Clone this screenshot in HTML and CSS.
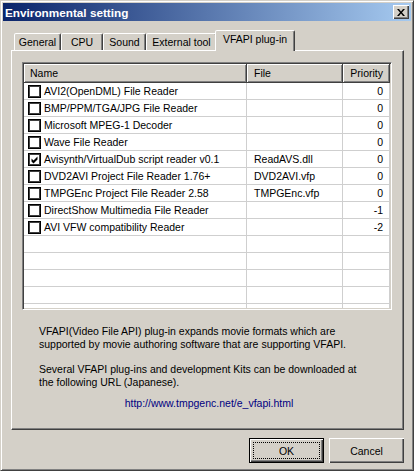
FILE: index.html
```html
<!DOCTYPE html>
<html>
<head>
<meta charset="utf-8">
<title>Environmental setting</title>
<link rel="stylesheet" href="styles.css">
</head>
<body>
<div class="window">
  <div class="titlebar">
    <span class="title">Environmental setting</span>
    <div class="close">
      <svg width="8" height="7" viewBox="0 0 8 7"><path d="M0 0h2l2 2.4L6 0h2L5 3.5 8 7H6L4 4.6 2 7H0l3-3.5z" fill="#000"/></svg>
    </div>
  </div>
  <div class="content">
    <div class="tabs">
      <div class="tab w-general">General</div>
      <div class="tab w-cpu">CPU</div>
      <div class="tab w-sound">Sound</div>
      <div class="tab w-ext">External tool</div>
      <div class="tab active w-vfapi">VFAPI plug-in</div>
    </div>
    <div class="panel">
      <div class="listview">
        <div class="lv-header">
          <div class="hcell c-name">Name</div>
          <div class="hcell c-file">File</div>
          <div class="hcell c-pri">Priority</div>
        </div>
        <div class="lv-body">
          <div class="row"><div class="cell c-name"><span class="chk"></span>AVI2(OpenDML) File Reader</div><div class="cell c-file"></div><div class="cell c-pri">0</div></div>
          <div class="row"><div class="cell c-name"><span class="chk"></span>BMP/PPM/TGA/JPG File Reader</div><div class="cell c-file"></div><div class="cell c-pri">0</div></div>
          <div class="row"><div class="cell c-name"><span class="chk"></span>Microsoft MPEG-1 Decoder</div><div class="cell c-file"></div><div class="cell c-pri">0</div></div>
          <div class="row"><div class="cell c-name"><span class="chk"></span>Wave File Reader</div><div class="cell c-file"></div><div class="cell c-pri">0</div></div>
          <div class="row"><div class="cell c-name"><span class="chk"><svg width="9" height="9" viewBox="0 0 9 9"><path d="M1.5 3.5L3.5 5.5 7.5 1.5V4.5L3.5 8.5 1.5 6.5Z" fill="#000"/></svg></span>Avisynth/VirtualDub script reader v0.1</div><div class="cell c-file">ReadAVS.dll</div><div class="cell c-pri">0</div></div>
          <div class="row"><div class="cell c-name"><span class="chk"></span>DVD2AVI Project File Reader 1.76+</div><div class="cell c-file">DVD2AVI.vfp</div><div class="cell c-pri">0</div></div>
          <div class="row"><div class="cell c-name"><span class="chk"></span>TMPGEnc Project File Reader 2.58</div><div class="cell c-file">TMPGEnc.vfp</div><div class="cell c-pri">0</div></div>
          <div class="row"><div class="cell c-name"><span class="chk"></span>DirectShow Multimedia File Reader</div><div class="cell c-file"></div><div class="cell c-pri">-1</div></div>
          <div class="row"><div class="cell c-name"><span class="chk"></span>AVI VFW compatibility Reader</div><div class="cell c-file"></div><div class="cell c-pri">-2</div></div>
          <div class="row"><div class="cell c-name"></div><div class="cell c-file"></div><div class="cell c-pri"></div></div>
          <div class="row"><div class="cell c-name"></div><div class="cell c-file"></div><div class="cell c-pri"></div></div>
          <div class="row"><div class="cell c-name"></div><div class="cell c-file"></div><div class="cell c-pri"></div></div>
          <div class="row"><div class="cell c-name"></div><div class="cell c-file"></div><div class="cell c-pri"></div></div>
          <div class="row"><div class="cell c-name"></div><div class="cell c-file"></div><div class="cell c-pri"></div></div>
        </div>
      </div>
      <div class="info">
        <p>VFAPI(Video File API) plug-in expands movie formats which are<br>supported by movie authoring software that are supporting VFAPI.</p>
        <p class="p2">Several VFAPI plug-ins and development Kits can be downloaded at<br>the following URL (Japanese).</p>
        <p class="url">http://www.tmpgenc.net/e_vfapi.html</p>
      </div>
    </div>
    <div class="buttons">
      <div class="btn default"><span class="focus">OK</span></div>
      <div class="btn">Cancel</div>
    </div>
  </div>
</div>
</body>
</html>
```
FILE: styles.css
```css
* { box-sizing: border-box; }
html, body { margin: 0; padding: 0; }
body {
  font-family: "Liberation Sans", Arial, sans-serif;
  font-size: 10.5px;
  color: #000;
  background: #D4D0C8;
}
.window {
  width: 414px;
  height: 471px;
  background: #D4D0C8;
  border: 1px solid;
  border-color: #D4D0C8 #404040 #404040 #D4D0C8;
  box-shadow: inset 1px 1px #fff, inset -1px -1px #808080;
  padding: 2px;
  display: flex;
  flex-direction: column;
}
.titlebar {
  height: 18px;
  flex: none;
  display: flex;
  align-items: center;
  justify-content: space-between;
  padding: 0 2px;
  background: linear-gradient(to right, #0A246A, #A6CAF0);
}
.title {
  color: #fff;
  font-weight: bold;
  font-size: 11.75px;
}
.close {
  width: 16px;
  height: 14px;
  background: #D4D0C8;
  box-shadow: inset 1px 1px #fff, inset -1px -1px #404040, inset -2px -2px #808080;
  display: flex;
  align-items: center;
  justify-content: center;
}
.close svg { display: block; }
.content {
  flex: 1;
  padding: 0 7px 0 8px;
}
.tabs {
  display: flex;
  align-items: flex-end;
  height: 20px;
  margin-top: 9px;
  padding-left: 3px;
}
.tab {
  height: 17px;
  border: 1px solid;
  border-bottom: none;
  border-color: #fff #404040 transparent #fff;
  box-shadow: inset -1px 0 #808080;
  border-radius: 2px 2px 0 0;
  text-align: center;
  line-height: 16px;
  white-space: nowrap;
  background: #D4D0C8;
}
.w-general { width: 47px; }
.w-cpu { width: 42px; }
.w-sound { width: 43px; }
.w-ext { width: 71px; }
.w-vfapi { width: 80px; }
.tab.active {
  height: 21px;
  margin: 0 -2px -1px;
  line-height: 17px;
  position: relative;
  z-index: 1;
}
.panel {
  height: 380px;
  border: 1px solid;
  border-color: #fff #404040 #404040 #fff;
  box-shadow: inset -1px -1px #808080;
  padding: 11px 0 0 10px;
}
.listview {
  width: 370px;
  height: 248px;
  background: #fff;
  border: 1px solid;
  border-color: #808080 #fff #fff #808080;
  box-shadow: inset 1px 1px #404040, inset -1px -1px #D4D0C8;
  padding: 1px;
  display: flex;
  flex-direction: column;
}
.lv-header {
  display: flex;
  height: 19px;
  flex: none;
}
.hcell {
  background: #D4D0C8;
  border-right: 1px solid #404040;
  border-bottom: 1px solid #404040;
  box-shadow: inset 1px 1px #fff, inset -1px -1px #808080;
  padding: 0 6px;
  line-height: 18px;
  white-space: nowrap;
}
.c-name { width: 223px; flex: none; }
.c-file { width: 96px; flex: none; }
.c-pri { width: 47px; flex: none; text-align: right; }
.hcell.c-file { padding-left: 7px; }
.lv-body {
  flex: 1;
  overflow: hidden;
}
.row {
  display: flex;
  height: 17px;
  border-bottom: 1px solid #cfcfcf;
}
.cell {
  border-right: 1px solid #cfcfcf;
  line-height: 15px;
  padding-top: 1px;
  white-space: nowrap;
  overflow: hidden;
}
.cell.c-name {
  display: flex;
  align-items: center;
  padding-left: 4px;
}
.cell.c-file { padding-left: 7px; }
.cell.c-pri { padding-right: 6px; }
.chk {
  width: 13px;
  height: 13px;
  flex: none;
  margin-right: 3px;
  background: #fff;
  border: 1px solid #000;
  box-shadow: inset 1px 1px #404040, inset -1px -1px #404040;
  padding: 1px;
}
.chk svg { display: block; }
.info {
  margin: 15px 0 0 17px;
  width: 340px;
  line-height: 13px;
}
.info p { margin: 0; }
.info .p2 { margin-top: 12px; }
.info .url {
  margin-top: 8px;
  text-align: center;
  color: #000080;
}
.buttons {
  display: flex;
  justify-content: flex-end;
  gap: 5px;
  margin-top: 8px;
}
.btn {
  width: 75px;
  height: 25px;
  background: #D4D0C8;
  box-shadow: inset 1px 1px #fff, inset -1px -1px #404040, inset -2px -2px #808080;
  display: flex;
  align-items: center;
  justify-content: center;
}
.btn.default {
  border: 1px solid #000;
  padding: 3px;
}
.focus {
  display: flex;
  align-items: center;
  justify-content: center;
  width: 100%;
  height: 100%;
  border: 1px dotted #000;
}
```
